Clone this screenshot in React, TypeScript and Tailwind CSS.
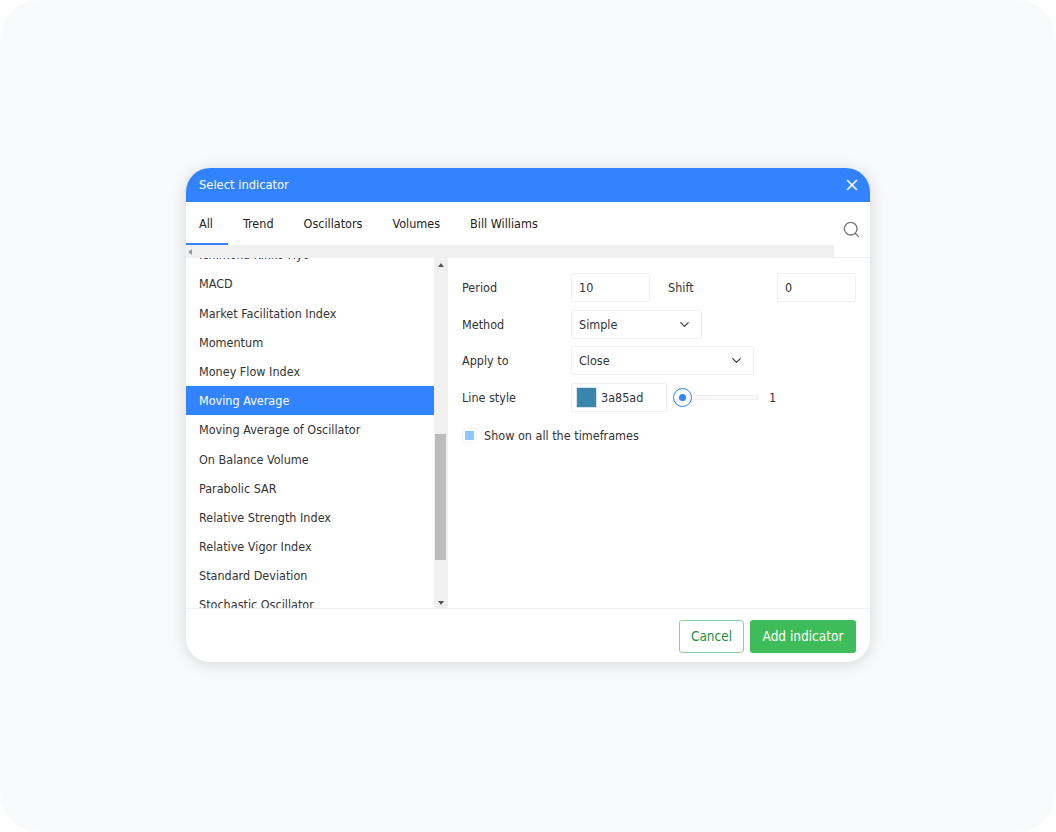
import { ChevronDown, Search, X } from "lucide-react";

const indicators = [
  "Ichimoku Kinko Hyo",
  "MACD",
  "Market Facilitation Index",
  "Momentum",
  "Money Flow Index",
  "Moving Average",
  "Moving Average of Oscillator",
  "On Balance Volume",
  "Parabolic SAR",
  "Relative Strength Index",
  "Relative Vigor Index",
  "Standard Deviation",
  "Stochastic Oscillator",
];

const tabs = ["All", "Trend", "Oscillators", "Volumes", "Bill Williams"];

function Field({ className, children }: { className: string; children: React.ReactNode }) {
  return (
    <div className={`flex h-[29px] items-center rounded-[2px] border border-[#f0f0f0] bg-white px-[7px] ${className}`}>
      {children}
    </div>
  );
}

function Label({ children }: { children: React.ReactNode }) {
  return <span className="w-[109px] pt-[2px]">{children}</span>;
}

export default function App() {
  return (
    <div className="h-[832px] w-[1056px] bg-white font-['DejaVu_Sans_Condensed','DejaVu_Sans',sans-serif] text-[12.5px] text-[#333]">
      <div className="flex h-full items-center justify-center rounded-[40px] bg-[#f7f9fb] pb-[2px]">
        <div className="flex h-[494px] w-[684px] flex-col overflow-hidden rounded-[24px] bg-white shadow-[0_2px_16px_rgba(0,0,0,0.14)]">
          {/* header */}
          <div className="flex h-[34px] shrink-0 items-center justify-between bg-[#3183ff] pl-[13px] pr-[9px] text-[12.8px] text-white">
            <span>Select indicator</span>
            <X size={18} strokeWidth={2.1} />
          </div>

          {/* tabs */}
          <div className="flex h-[56px] shrink-0">
            <div className="flex w-[648px] flex-col">
              <div className="flex h-[43px]">
                {tabs.map((tab, i) => (
                  <div
                    key={tab}
                    className={`flex h-full items-center border-b-2 pt-[3px] text-[#222] ${i === 0 ? "border-[#3183ff] pl-[13px] pr-[15px]" : "border-transparent px-[15px]"}`}
                  >
                    {tab}
                  </div>
                ))}
              </div>
              <div className="flex h-[13px] items-center bg-[#f0f0f0] pl-[2px]">
                <div className="h-0 w-0 border-y-[3px] border-r-[4px] border-y-transparent border-r-[#999]" />
              </div>
            </div>
            <div className="flex flex-1 justify-end border-b border-[#f2f2f2] pr-[9px] pt-[18px]">
              <Search size={19} strokeWidth={1.7} className="text-[#777]" />
            </div>
          </div>

          {/* body */}
          <div className="flex min-h-0 flex-1">
            <div className="h-full w-[248px] shrink-0 overflow-hidden">
              <div className="-mt-[18px]">
                {indicators.map((name) => (
                  <div
                    key={name}
                    className={`flex h-[29.2px] items-center pl-[13px] pt-[2px] ${name === "Moving Average" ? "bg-[#3183ff] text-white" : ""}`}
                  >
                    {name}
                  </div>
                ))}
              </div>
            </div>

            <div className="flex h-full w-[14px] shrink-0 flex-col items-center bg-[#f0f0f0] pb-[3px] pt-[5px]">
              <div className="h-0 w-0 border-x-[3px] border-b-[4px] border-x-transparent border-b-[#555]" />
              <div className="ml-[-2px] mt-[167px] h-[126px] w-[11px] bg-[#bcbcbc]" />
              <div className="mt-auto h-0 w-0 border-x-[3px] border-t-[4px] border-x-transparent border-t-[#555]" />
            </div>

            <div className="flex flex-1 flex-col gap-[7.5px] pl-[14px] pr-[14px] pt-[15px]">
              <div className="flex items-center">
                <Label>Period</Label>
                <Field className="w-[79px]"><span className="pt-[2px]">10</span></Field>
                <span className="ml-[18px] w-[109px] pt-[2px]">Shift</span>
                <Field className="w-[79px]"><span className="pt-[2px]">0</span></Field>
              </div>
              <div className="flex items-center">
                <Label>Method</Label>
                <Field className="w-[131px] justify-between pr-[9px]">
                  <span className="pt-[2px]">Simple</span>
                  <ChevronDown size={15} strokeWidth={1.75} />
                </Field>
              </div>
              <div className="flex items-center">
                <Label>Apply to</Label>
                <Field className="w-[183px] justify-between pr-[9px]">
                  <span className="pt-[2px]">Close</span>
                  <ChevronDown size={15} strokeWidth={1.75} />
                </Field>
              </div>
              <div className="flex items-center">
                <Label>Line style</Label>
                <Field className="w-[96px] gap-[4px] pl-[4px]">
                  <div className="h-[21px] w-[21px] border border-[#d5e3ec] bg-[#3a85ad]" />
                  <span className="pt-[2px]">3a85ad</span>
                </Field>
                <div className="ml-[6px] flex w-[85px] items-center">
                  <div className="z-10 flex h-[19px] w-[19px] shrink-0 items-center justify-center rounded-full border border-[#3183ff] bg-white">
                    <div className="h-[7px] w-[7px] rounded-full bg-[#3183ff]" />
                  </div>
                  <div className="-ml-[1px] h-[5px] flex-1 border border-[#eeeeee] bg-[#fafafa]" />
                </div>
                <span className="ml-[11px] pt-[2px]">1</span>
              </div>
              <div className="mt-[7px] flex items-center gap-[7px]">
                <div className="flex h-[15px] w-[15px] items-center justify-center border border-[#f3f3f3]">
                  <div className="h-[9px] w-[9px] bg-[#8cc8ff]" />
                </div>
                <span className="pt-[1px]">Show on all the timeframes</span>
              </div>
            </div>
          </div>

          {/* footer */}
          <div className="flex h-[54px] shrink-0 items-start justify-end gap-[6px] border-t border-[#f0f0f0] pr-[14px] pt-[11px] text-[13.5px]">
            <button className="h-[33px] w-[65px] rounded-[3px] border border-[#8fcf9f] bg-white text-[#1e8e3e]">Cancel</button>
            <button className="h-[33px] w-[106px] rounded-[3px] bg-[#3fbc5a] text-white">Add indicator</button>
          </div>
        </div>
      </div>
    </div>
  );
}
